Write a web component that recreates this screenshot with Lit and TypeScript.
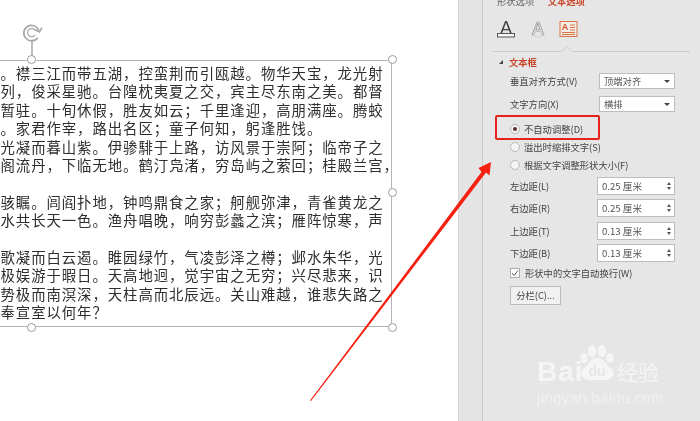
import { LitElement, html, css, svg } from "lit";
import { customElement } from "lit/decorators.js";

const LINES: [string, boolean][] = [
  ["庐。襟三江而带五湖，控蛮荆而引瓯越。物华天宝，龙光射", true],
  ["列，俊采星驰。台隍枕夷夏之交，宾主尽东南之美。都督", false],
  ["暂驻。十旬休假，胜友如云；千里逢迎，高朋满座。腾蛟", false],
  ["下。家君作宰，路出名区；童子何知，躬逢胜饯。", true],
  ["光凝而暮山紫。伊骖騑于上路，访风景于崇阿；临帝子之", false],
  ["阁流丹，下临无地。鹤汀凫渚，穷岛屿之萦回；桂殿兰宫，", false],
  ["", false],
  ["骇瞩。闾阎扑地，钟鸣鼎食之家；舸舰弥津，青雀黄龙之", false],
  ["水共长天一色。渔舟唱晚，响穷彭蠡之滨；雁阵惊寒，声", false],
  ["", false],
  ["歌凝而白云遏。睢园绿竹，气凌彭泽之樽；邺水朱华，光", false],
  ["极娱游于暇日。天高地迥，觉宇宙之无穷；兴尽悲来，识", false],
  ["势极而南溟深，天柱高而北辰远。关山难越，谁悲失路之", false],
  ["奉宣室以何年？", false],
];

const HANDLES = ["tm", "tr", "mr", "br", "bm"];
const SPINS = [
  ["左边距(L)", "0.25 厘米"],
  ["右边距(R)", "0.25 厘米"],
  ["上边距(T)", "0.13 厘米"],
  ["下边距(B)", "0.13 厘米"],
];

@customElement("app-root")
export class AppRoot extends LitElement {
  static styles = css`
    :host {
      display: flex;
      width: 700px;
      height: 421px;
      overflow: hidden;
      position: relative;
      background: #fff;
      font-family: "Noto Sans CJK SC", "Liberation Sans", sans-serif;
    }
    .canvas { flex: 0 0 458px; position: relative; overflow: hidden; }
    .rotate { position: absolute; left: 21px; top: 22px; width: 22px; height: 22px; }
    .stem { position: absolute; left: 31px; top: 41px; width: 1.5px; height: 19px; background: #bdbdbd; }
    .box {
      position: absolute; left: -20px; top: 60px; width: 412px; height: 267px;
      box-sizing: border-box; border: 1.5px solid #b4b4b4; padding: 3px 0 0 19.5px;
    }
    .text {
      filter: blur(0.35px); color: #2e2e2e; font-size: 14.4px; letter-spacing: 0.93px;
      line-height: 18.38px; white-space: nowrap;
    }
    .line { height: 18.38px; }
    .bleed { margin-left: -15.33px; }
    .h {
      position: absolute; width: 7px; height: 7px; border-radius: 50%;
      background: #fff; border: 1.5px solid #9c9c9c; box-sizing: content-box;
    }
    .tm { left: 46px; top: -6px; }
    .tr { right: -6px; top: -6px; }
    .mr { right: -6px; top: 127px; }
    .br { right: -6px; bottom: -6px; }
    .bm { left: 46px; bottom: -6px; }

    .strip {
      flex: 0 0 25px; box-sizing: border-box; background: #e4e4e4;
      border-left: 1px solid #d6d6d6; border-right: 1px solid #cbcbcb;
    }
    .panel {
      flex: 1; background: #e6e6e6; position: relative; color: #444;
      font-size: 9.3px; line-height: 14px; display: flex; flex-direction: column;
    }
    .blurred { filter: blur(0.45px); display: flex; flex-direction: column; }
    .tabs { display: flex; gap: 13.5px; margin-top: -6px; padding-left: 14px; height: 14px; color: #666; }
    .tabs .on { color: #c9452a; font-weight: 700; }
    .icons { display: flex; align-items: flex-start; margin-top: 12px; padding-left: 12px; height: 20px; }
    .icons svg { display: block; flex: none; }
    .rule { display: block; margin: 5px 0 0 10px; }
    .head {
      display: flex; align-items: center; gap: 6px; margin-top: 3px; padding-left: 16px;
      height: 14px; color: #c9452a; font-weight: 700;
    }
    .tri { width: 0; height: 0; border-style: solid; border-width: 0 0 4px 4px; border-color: transparent transparent #444 transparent; }
    .row { display: flex; align-items: center; padding-left: 27px; }
    .row label { flex: none; }
    .sel { height: 16px; }
    .sel label { width: 89px; }
    .sel-first { margin-top: 4px; }
    .sel-next { margin-top: 7px; }
    .field {
      box-sizing: border-box; background: #fff; border: 1px solid #bdbdbd; color: #555;
      display: flex; align-items: center; justify-content: space-between;
    }
    .sel .field { width: 76px; height: 16px; padding: 0 4px 0 4px; }
    .caret { width: 0; height: 0; border-style: solid; border-width: 3px 3px 0 3px; border-color: #444 transparent transparent transparent; }
    .radios { margin-top: 8px; }
    .radio { height: 18px; gap: 4px; padding-left: 27px; }
    .dot {
      flex: none; width: 10px; height: 10px; box-sizing: border-box; border-radius: 50%;
      background: #f4f4f4; border: 1px solid #b8b8b8; display: flex; align-items: center; justify-content: center;
    }
    .dot i { width: 4px; height: 4px; border-radius: 50%; background: #5a342a; }
    .spins { display: flex; flex-direction: column; gap: 4.33px; margin-top: 3px; }
    .spin { height: 18px; }
    .spin label { width: 87px; }
    .spin .field { width: 78px; height: 18px; padding: 0 3px 0 4px; font-size: 9.6px; }
    .arrows { display: flex; flex-direction: column; gap: 2px; }
    .up, .down { width: 0; height: 0; border-style: solid; border-color: transparent; }
    .up { border-width: 0 2.5px 3.5px 2.5px; border-bottom-color: #555; }
    .down { border-width: 3.5px 2.5px 0 2.5px; border-top-color: #555; }
    .check { margin-top: 5px; height: 12px; gap: 5px; }
    .tick { flex: none; display: block; }
    .btn {
      margin: 7px 0 0 27px; width: 51px; height: 19px; box-sizing: border-box; background: #f1f1f1;
      border: 1px solid #bcbcbc; display: flex; align-items: center; justify-content: center; color: #444;
    }
    .mark {
      position: absolute; left: 12px; top: 115px; width: 105px; height: 25px; box-sizing: border-box;
      border: 2px solid #e5231b; border-radius: 2px;
    }
    .arrow { position: absolute; left: 0; top: 0; pointer-events: none; }
    .wm {
      position: absolute; left: 537px; top: 345px; width: 130px; color: rgba(255, 255, 255, 0.6);
      font-family: "Liberation Sans", sans-serif; filter: blur(0.4px);
    }
    .wm-top { display: flex; align-items: flex-end; height: 42px; }
    .bai { font-size: 28px; font-weight: 700; line-height: 30px; letter-spacing: 1px; width: 43px; }
    .paw { flex: none; display: block; margin-bottom: 4px; }
    .jy {
      font-family: "Noto Sans CJK SC", sans-serif; font-size: 21px; line-height: 26px;
      margin-left: 1px; margin-bottom: 3px; white-space: nowrap;
    }
    .domain { font-size: 15px; line-height: 18px; letter-spacing: 0.35px; margin-top: 2px; white-space: nowrap; opacity: 0.75; }
  `;

  render() {
    return html`
      <div class="canvas">
        <div class="stem"></div>
        <svg class="rotate" viewBox="0 0 21 21" fill="none" stroke="#a8a8a8" stroke-width="1.6">
          <path d="M17 8A7.4 7.4 0 1 0 16 15" />
          <path d="M14 8.5A4 4 0 1 0 13.5 12.5" stroke-width="1.2" />
          <path d="M13.5 7.5L17.5 9.5L20 5.5" />
        </svg>
        <div class="box">
          <div class="text">
            ${LINES.map(([t, bleed]) => html`<div class="line ${bleed ? "bleed" : ""}">${t}</div>`)}
          </div>
          ${HANDLES.map((h) => html`<div class="h ${h}"></div>`)}
        </div>
      </div>
      <div class="strip"></div>
      <div class="panel">
        <div class="blurred">
          <div class="tabs"><span>形状选项</span><span class="on">文本选项</span></div>
          <div class="icons">
            <svg width="22" height="20" viewBox="0 0 22 20">
              <text x="11" y="14" text-anchor="middle" font-family="Liberation Sans" font-size="18" fill="#444">A</text>
              <rect x="2.5" y="13.5" width="17" height="3.5" fill="#f6f6f6" stroke="#555" />
            </svg>
            <svg width="16" height="20" viewBox="0 0 16 20" style="margin-left:13px">
              <text x="8" y="14.5" text-anchor="middle" font-family="Liberation Sans" font-size="18" fill="#f4f4f4" stroke="#8a8a8a" stroke-width="0.7">A</text>
              <circle cx="8" cy="14" r="3.5" fill="none" stroke="#cfcfcf" />
            </svg>
            <svg width="19" height="17" viewBox="0 0 19 17" style="margin-left:13px;margin-top:1px">
              <rect x="1" y="0.5" width="17" height="15" fill="#f4ebe5" stroke="#d8764a" />
              <text x="6" y="9" text-anchor="middle" font-family="Liberation Sans" font-size="9" font-weight="700" fill="#cf5a2c">A</text>
              <path d="M3 11.5H16M3 13.5H16M11 4H16M11 6.5H16M11 9H16" stroke="#d8764a" fill="none" />
            </svg>
          </div>
          <svg class="rule" width="197" height="7" viewBox="0 0 197 7" fill="none" stroke="#cdcdcd">
            <path d="M0 6.5H69L74 1L79 6.5H197" />
          </svg>
          <div class="head"><span class="tri"></span><span>文本框</span></div>
          <div class="row sel sel-first">
            <label>垂直对齐方式(V)</label>
            <div class="field"><span>顶端对齐</span><span class="caret"></span></div>
          </div>
          <div class="row sel sel-next">
            <label>文字方向(X)</label>
            <div class="field"><span>横排</span><span class="caret"></span></div>
          </div>
          <div class="radios">
            <div class="row radio"><span class="dot"><i></i></span><span>不自动调整(D)</span></div>
            <div class="row radio"><span class="dot"></span><span>溢出时缩排文字(S)</span></div>
            <div class="row radio"><span class="dot"></span><span>根据文字调整形状大小(F)</span></div>
          </div>
          <div class="spins">
            ${SPINS.map(
              ([l, v]) => html`<div class="row spin">
                <label>${l}</label>
                <div class="field">
                  <span>${v}</span>
                  <span class="arrows"><span class="up"></span><span class="down"></span></span>
                </div>
              </div>`
            )}
          </div>
          <div class="row check">
            <svg class="tick" width="10" height="10" viewBox="0 0 10 10">
              <rect x="0.5" y="0.5" width="9" height="9" fill="#fff" stroke="#ababab" />
              <path d="M2 5L4 7.5L8 2.5" fill="none" stroke="#555" />
            </svg>
            <span>形状中的文字自动换行(W)</span>
          </div>
          <div class="btn">分栏(C)...</div>
        </div>
        <div class="mark"></div>
      </div>
      <svg class="arrow" width="700" height="421" viewBox="0 0 700 421">
        <polygon fill="#f5200f" points="310,400.5 481.5,172 478.5,168 491,162 489.5,175.5 486,172.5 311,401" />
      </svg>
      <div class="wm">
        <div class="wm-top">
          <span class="bai">Bai</span>
          <svg class="paw" width="36" height="42" viewBox="0 0 36 42">
            ${svg`
              <ellipse cx="4" cy="17" rx="3.6" ry="5" fill="currentColor" />
              <ellipse cx="12" cy="10" rx="4.2" ry="6" fill="currentColor" />
              <ellipse cx="22" cy="10" rx="4.2" ry="6" fill="currentColor" />
              <ellipse cx="30" cy="17" rx="3.6" ry="5" fill="currentColor" />
              <path d="M17 17C10 17 9 24 4 27C-1 31 2 39 9 39H26C33 39 36 31 31 27C26 24 24 17 17 17Z" fill="currentColor" />
              <text x="17" y="35" text-anchor="middle" font-family="Liberation Sans" font-weight="700" font-size="14" fill="#e6e6e6">du</text>
            `}
          </svg>
          <span class="jy">经验</span>
        </div>
        <div class="domain">jingyan.baidu.com</div>
      </div>
    `;
  }
}
